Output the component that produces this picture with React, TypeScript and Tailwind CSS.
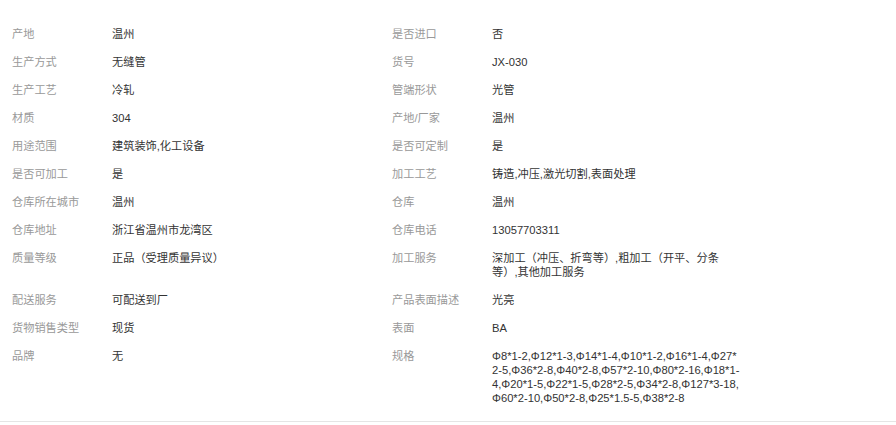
import React from "react";

type Item = { label: string; value: React.ReactNode };

const rows: [Item, Item][] = [
  [{ label: "产地", value: "温州" }, { label: "是否进口", value: "否" }],
  [{ label: "生产方式", value: "无缝管" }, { label: "货号", value: "JX-030" }],
  [{ label: "生产工艺", value: "冷轧" }, { label: "管端形状", value: "光管" }],
  [{ label: "材质", value: "304" }, { label: "产地/厂家", value: "温州" }],
  [{ label: "用途范围", value: "建筑装饰,化工设备" }, { label: "是否可定制", value: "是" }],
  [{ label: "是否可加工", value: "是" }, { label: "加工工艺", value: "铸造,冲压,激光切割,表面处理" }],
  [{ label: "仓库所在城市", value: "温州" }, { label: "仓库", value: "温州" }],
  [{ label: "仓库地址", value: "浙江省温州市龙湾区" }, { label: "仓库电话", value: "13057703311" }],
  [
    { label: "质量等级", value: "正品（受理质量异议）" },
    {
      label: "加工服务",
      value: (
        <>
          深加工（冲压、折弯等）,粗加工（开平、分条
          <br />
          等）,其他加工服务
        </>
      ),
    },
  ],
  [{ label: "配送服务", value: "可配送到厂" }, { label: "产品表面描述", value: "光亮" }],
  [{ label: "货物销售类型", value: "现货" }, { label: "表面", value: "BA" }],
  [
    { label: "品牌", value: "无" },
    {
      label: "规格",
      value: (
        <>
          Φ8*1-2,Φ12*1-3,Φ14*1-4,Φ10*1-2,Φ16*1-4,Φ27*
          <br />
          2-5,Φ36*2-8,Φ40*2-8,Φ57*2-10,Φ80*2-16,Φ18*1-
          <br />
          4,Φ20*1-5,Φ22*1-5,Φ28*2-5,Φ34*2-8,Φ127*3-18,
          <br />
          Φ60*2-10,Φ50*2-8,Φ25*1.5-5,Φ38*2-8
        </>
      ),
    },
  ],
];

function Cell({ item }: { item: Item }) {
  return (
    <div className="flex pl-[12px]">
      <div className="w-[100px] shrink-0 text-[#999999]">{item.label}</div>
      <div className="flex-1 whitespace-nowrap text-[#333333]">{item.value}</div>
    </div>
  );
}

export default function App() {
  return (
    <div
      className="w-[896px] h-[425px] overflow-hidden bg-white text-[11.2px] leading-[14px]"
      style={{ fontFamily: '"Liberation Sans", Arial, "Noto Sans CJK SC", sans-serif' }}
    >
      <div className="grid grid-cols-[380px_1fr] gap-y-[14px] pt-[27px] pb-[16px] border-b border-[#e5e5e5]">
        {rows.map(([a, b], i) => (
          <React.Fragment key={i}>
            <Cell item={a} />
            <Cell item={b} />
          </React.Fragment>
        ))}
      </div>
    </div>
  );
}
